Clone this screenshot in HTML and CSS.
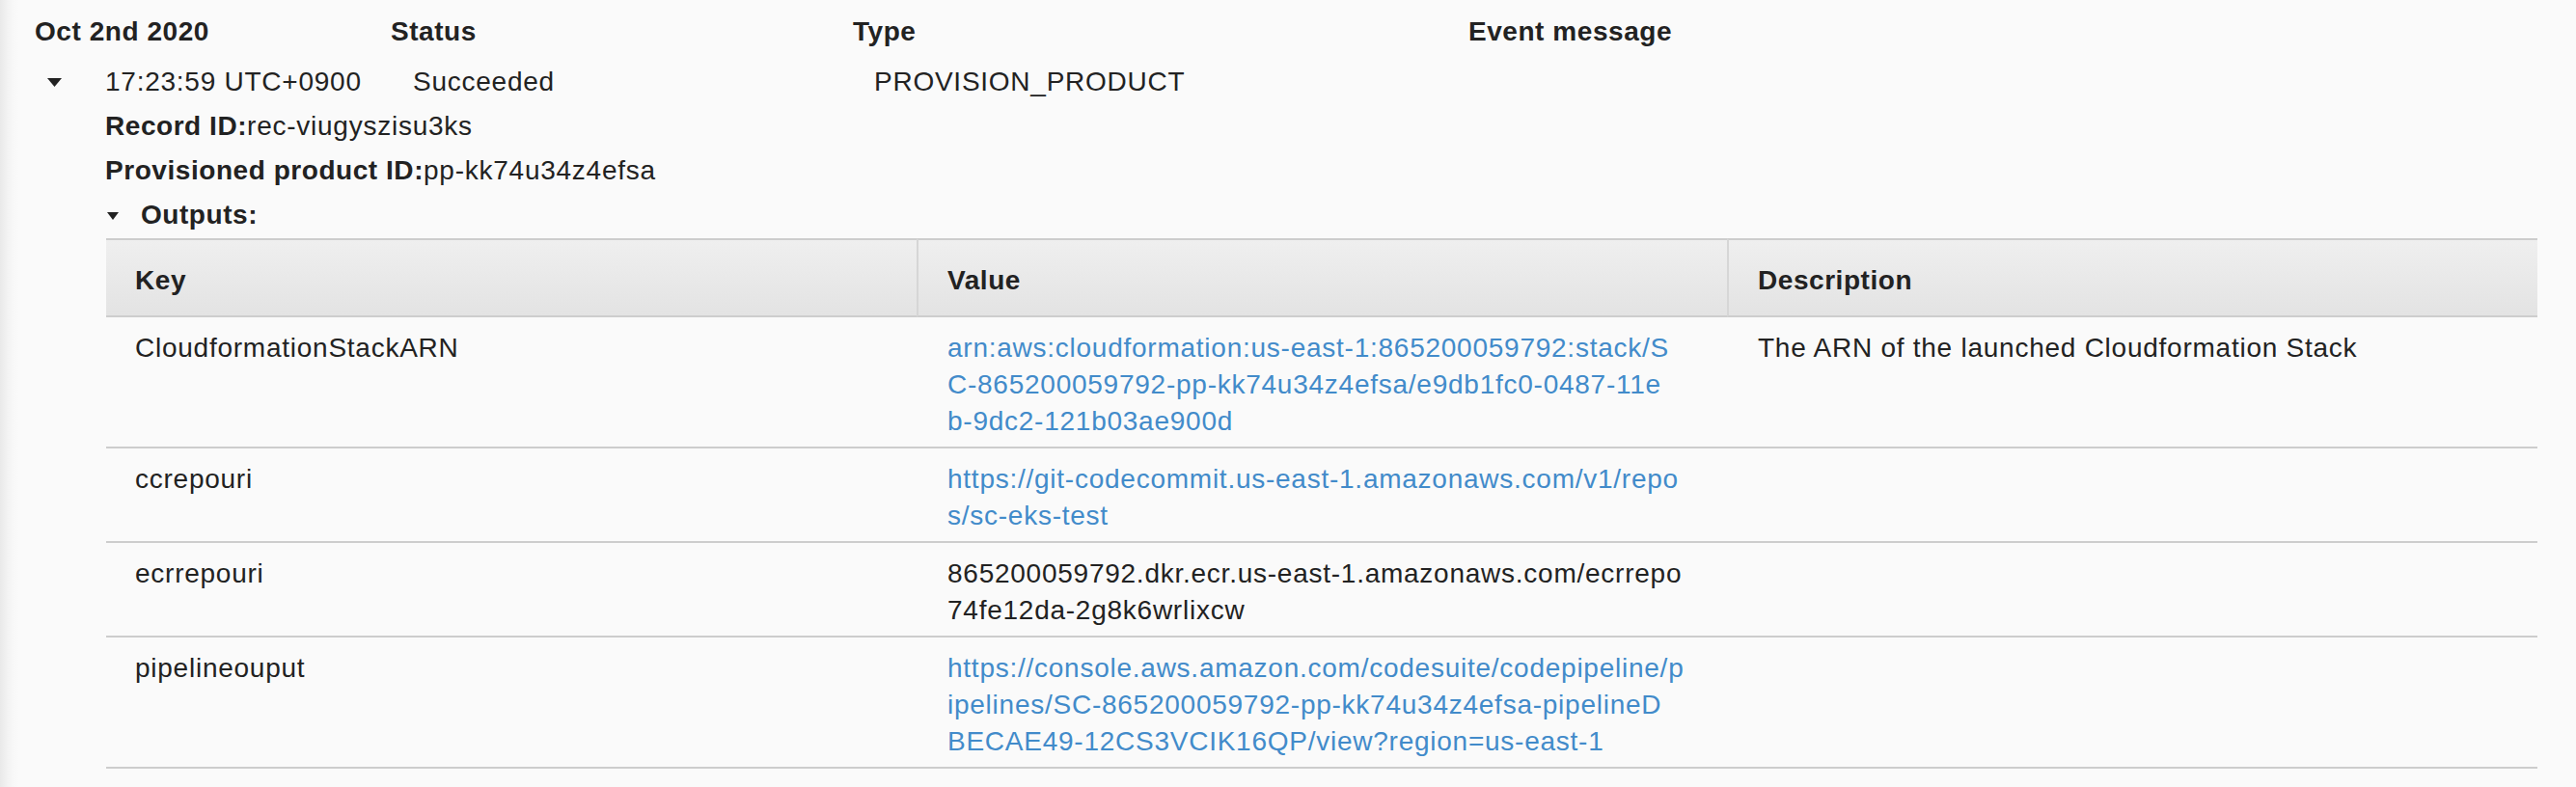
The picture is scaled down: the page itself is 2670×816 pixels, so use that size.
FILE: index.html
```html
<!DOCTYPE html>
<html lang="en">
<head>
<meta charset="utf-8">
<title>Events</title>
<link rel="stylesheet" href="styles.css">
</head>
<body>
<div class="page">
  <div class="events-head">
    <span>Oct 2nd 2020</span>
    <span>Status</span>
    <span>Type</span>
    <span>Event message</span>
  </div>
  <div class="event">
    <div class="event-row">
      <span class="toggle"><svg class="caret" width="15" height="9" viewBox="0 0 15 9"><polygon points="0,0 15,0 7.5,9" fill="#222"/></svg></span>
      <span>17:23:59 UTC+0900</span>
      <span>Succeeded</span>
      <span>PROVISION_PRODUCT</span>
      <span></span>
    </div>
    <div class="event-details">
      <div class="detail"><b>Record ID:</b>rec-viugyszisu3ks</div>
      <div class="detail"><b>Provisioned product ID:</b>pp-kk74u34z4efsa</div>
      <div class="outputs-toggle"><svg class="caret-sm" width="12" height="8" viewBox="0 0 12 8"><polygon points="0,0 12,0 6,8" fill="#222"/></svg><b>Outputs:</b></div>
    </div>
    <table class="outputs">
      <thead>
        <tr><th>Key</th><th>Value</th><th>Description</th></tr>
      </thead>
      <tbody>
        <tr>
          <td>CloudformationStackARN</td>
          <td><a class="link" href="#"><span class="ln">arn:aws:cloudformation:us-east-1:865200059792:stack/S</span><span class="ln">C-865200059792-pp-kk74u34z4efsa/e9db1fc0-0487-11e</span><span class="ln">b-9dc2-121b03ae900d</span></a></td>
          <td>The ARN of the launched Cloudformation Stack</td>
        </tr>
        <tr>
          <td>ccrepouri</td>
          <td><a class="link" href="#"><span class="ln">https://git-codecommit.us-east-1.amazonaws.com/v1/repo</span><span class="ln">s/sc-eks-test</span></a></td>
          <td></td>
        </tr>
        <tr>
          <td>ecrrepouri</td>
          <td><span class="ln">865200059792.dkr.ecr.us-east-1.amazonaws.com/ecrrepo</span><span class="ln">74fe12da-2g8k6wrlixcw</span></td>
          <td></td>
        </tr>
        <tr>
          <td>pipelineouput</td>
          <td><a class="link" href="#"><span class="ln">https://console.aws.amazon.com/codesuite/codepipeline/p</span><span class="ln">ipelines/SC-865200059792-pp-kk74u34z4efsa-pipelineD</span><span class="ln">BECAE49-12CS3VCIK16QP/view?region=us-east-1</span></a></td>
          <td></td>
        </tr>
      </tbody>
    </table>
  </div>
</div>
</body>
</html>
```
FILE: styles.css
```css
html, body {
  margin: 0;
  padding: 0;
  background: #fafafa;
}

body {
  font-family: "Liberation Sans", Arial, Helvetica, sans-serif;
  font-size: 28px;
  color: #222222;
  letter-spacing: 0.75px;
}

b, th, .events-head {
  letter-spacing: 0.55px;
}

.page {
  min-height: 816px;
  box-sizing: border-box;
  padding: 10px 40px 0 36px;
  background: linear-gradient(to right, #e9e9e9 0px, #f3f3f3 8px, #f8f8f8 14px, #fafafa 20px);
}

.events-head {
  display: grid;
  grid-template-columns: 369px 479px 638px 1fr;
  line-height: 46px;
  font-weight: bold;
  margin-bottom: 6px;
}

.event-row {
  display: grid;
  grid-template-columns: 60px 319px 478px 1fr auto;
  padding-left: 13px;
  line-height: 46px;
}

.toggle {
  display: flex;
  align-items: center;
}

.caret {
  display: block;
  margin-top: 1px;
}

.event-details {
  padding-left: 73px;
  line-height: 46px;
}

.detail b {
  font-weight: bold;
}

.outputs-toggle {
  display: flex;
  align-items: center;
  padding-left: 2px;
}

.caret-sm {
  display: block;
  margin-right: 23px;
  margin-top: 2px;
}

.outputs {
  margin-top: 1px;
  margin-left: 74px;
  width: 2520px;
  table-layout: fixed;
  border-collapse: separate;
  border-spacing: 0;
  line-height: 38px;
}

.outputs th {
  text-align: left;
  font-weight: bold;
  padding: 23px 32px 17px 30px;
  background: linear-gradient(to bottom, #efefef 0%, #e3e3e3 100%);
  border-top: 2px solid #cdcdcd;
  border-bottom: 2px solid #cdcdcd;
}

.outputs th + th {
  border-left: 2px solid #d6d6d6;
}

.outputs td {
  vertical-align: top;
  padding: 13px 32px 7px 30px;
  border-bottom: 2px solid #cdcdcd;
}

.outputs td + td {
  padding-left: 32px;
}

.ln {
  display: block;
  white-space: nowrap;
}

.link {
  color: #428bca;
  text-decoration: none;
}
```
